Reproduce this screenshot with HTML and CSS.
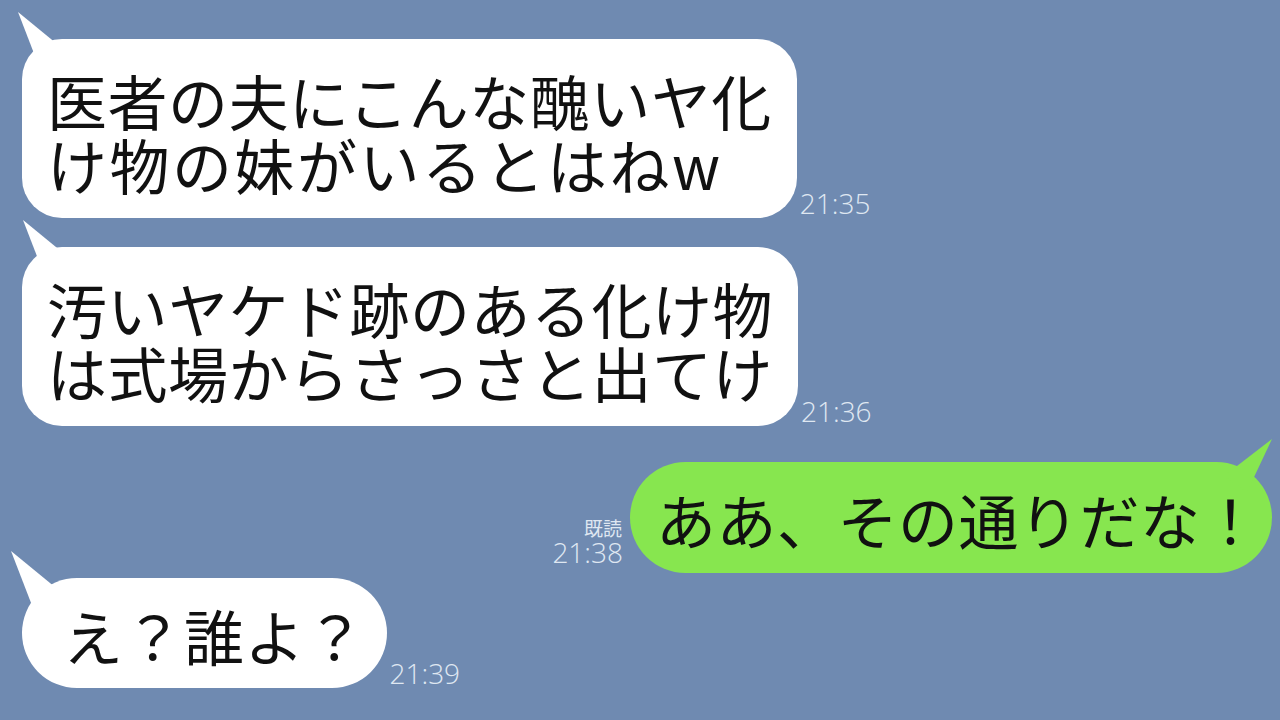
FILE: index.html
```html
<!DOCTYPE html>
<html lang="ja">
<head>
  <meta charset="UTF-8" />
  <meta name="viewport" content="width=device-width, initial-scale=1" />
  <title>トーク</title>
  <link rel="stylesheet" href="styles.css">
</head>
<body>

  <div class="chat">

    <div class="row">
      <div class="bubble wide">
        <svg class="tail" viewBox="0 0 70 70"><polygon points="8,3 58,44 30,60" /></svg>
        医者の夫にこんな醜いヤ化<br><span class="loose">け物の妹がいるとはねw</span>
      </div>
      <div class="meta"><span class="time">21:35</span></div>
    </div>

    <div class="row second">
      <div class="bubble wide">
        <svg class="tail tail-b" viewBox="0 0 70 70"><polygon points="8,3 58,44 30,60" /></svg>
        汚いヤケド跡のある化け物<br>は式場からさっさと出てけ
      </div>
      <div class="meta"><span class="time">21:36</span></div>
    </div>

    <div class="row mine">
      <div class="meta read">
        <span class="read-mark">既読</span>
        <span class="time">21:38</span>
      </div>
      <div class="bubble green">
        <svg class="tail tail-r" viewBox="0 0 70 70"><polygon points="69,3 44,56 21,40" /></svg>
        ああ、その通りだな！
      </div>
    </div>

    <div class="row last">
      <div class="bubble short">
        <svg class="tail tail-c" viewBox="0 0 70 70"><polygon points="8,3 58,44 30,60" /></svg>
        え？誰よ？
      </div>
      <div class="meta"><span class="time">21:39</span></div>
    </div>

  </div>

</body>
</html>
```

FILE: styles.css
```css
* {
  box-sizing: border-box;
}

body {
  margin: 0;
  padding: 0;
  background: #6f8ab1;
  font-family: "Noto Sans CJK JP", "Noto Sans", sans-serif;
  overflow: hidden;
}

.chat {
  padding-top: 39px;
}

.row {
  display: flex;
  align-items: flex-end;
  gap: 3px;
  padding: 0 8px 0 22px;
}

.row.second {
  margin-top: 29px;
}

.row.mine {
  justify-content: flex-end;
  gap: 7px;
  margin-top: 36px;
}

.row.last {
  margin-top: 5px;
}

.bubble {
  position: relative;
  background: #fff;
  color: #111;
  font-size: 60px;
  line-height: 64px;
  letter-spacing: 0.5px;
  padding: 29px 25px 22px 25px;
  border-radius: 40px;
  white-space: nowrap;
}

.loose {
  letter-spacing: 2.5px;
}

.bubble.green {
  background: #87e64f;
  border-radius: 56px;
  padding: 25px 11px 22px 26px;
}

.bubble.short {
  border-radius: 56px;
  padding: 25px 21px 21px 41px;
}

.tail {
  position: absolute;
  left: -12px;
  top: -30px;
  width: 70px;
  height: 70px;
  fill: #fff;
}

.tail-b {
  left: -7px;
}

.tail-c {
  left: -19px;
}

.tail-r {
  left: auto;
  right: -1px;
  top: -26px;
  fill: #87e64f;
}

.meta {
  display: flex;
  flex-direction: column;
  align-items: flex-start;
  margin-bottom: 1px;
  color: #dfe7f1;
}

.meta.read {
  align-items: flex-end;
  margin-bottom: 7px;
}

.time {
  font-family: "Open Sans", "Noto Sans", sans-serif;
  font-weight: 300;
  font-size: 28px;
  line-height: 28px;
}

.read-mark {
  font-size: 19px;
  line-height: 20px;
  margin-right: 1px;
}
```
